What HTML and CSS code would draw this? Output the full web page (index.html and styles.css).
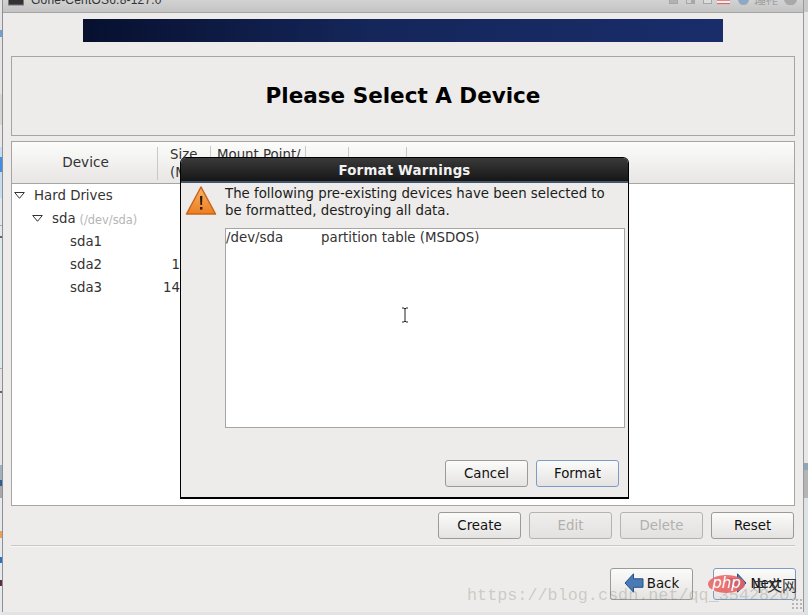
FILE: index.html
```html
<!DOCTYPE html>
<html lang="en">
<head>
<meta charset="utf-8">
<title>Format Warnings</title>
<link rel="stylesheet" href="styles.css">
</head>
<body>
<div class="strip-left"></div>
<div class="strip-right"></div>
<div class="vm">
  <div class="titlebar">
    <svg class="term" width="16" height="6" viewBox="0 0 16 6"><rect x=".5" y="-6" width="15" height="11" fill="#333" stroke="#777"/></svg>
    <span class="vmname">Gone-CentOS6.8-127.0</span>
    <span class="tools">
      <i class="tool"></i><i class="tool half"></i><i class="tool light"></i>
      <svg class="flag" width="13" height="5" viewBox="0 0 13 5"><rect width="13" height="5" fill="#eee"/><rect y="0" width="13" height="1" fill="#d98a8a"/><rect y="3" width="13" height="1.4" fill="#cf6a6a"/></svg>
      <svg class="gear" width="11" height="5" viewBox="0 0 11 5"><circle cx="5.5" cy="-.5" r="5.5" fill="#8fa8c4"/></svg>
      <span class="ops">操作</span>
      <svg class="close" width="13" height="5" viewBox="0 0 13 5"><circle cx="6.5" cy="-1" r="6.5" fill="#a9a9a9"/></svg>
    </span>
  </div>
  <div class="content">
    <div class="banner"></div>
    <div class="header"><h1>Please Select A Device</h1></div>
    <div class="table">
      <div class="thead">
        <div class="th th-device">Device</div>
        <div class="th th-size">Size<br>(MB)</div>
        <div class="th th-mount">Mount Point/<br>RAID/Volume</div>
        <div class="th th-a"></div>
        <div class="th th-b"></div>
        <div class="th th-rest"></div>
      </div>
      <div class="tbody">
        <div class="row"><svg class="arrow" width="11" height="7" viewBox="0 0 11 7"><path d="M.7.5h9.6L5.5 6.3z" fill="#fff" stroke="#333"/></svg><span>Hard Drives</span></div>
        <div class="row l1"><svg class="arrow" width="11" height="7" viewBox="0 0 11 7"><path d="M.7.5h9.6L5.5 6.3z" fill="#fff" stroke="#333"/></svg><span>sda</span><small>(/dev/sda)</small></div>
        <div class="row l2"><span class="name">sda1</span></div>
        <div class="row l2"><span class="name">sda2</span><span class="size">1</span></div>
        <div class="row l2"><span class="name">sda3</span><span class="size">14</span></div>
      </div>
    </div>
    <div class="actions">
      <button class="btn">Create</button>
      <button class="btn off">Edit</button>
      <button class="btn off">Delete</button>
      <button class="btn">Reset</button>
    </div>
    <div class="rule"></div>
    <div class="nav">
      <button class="btn tall">
        <svg width="20" height="20" viewBox="0 0 20 20"><path d="M1 10 9.5 .8v5H19v8.5H9.500v4.900z" fill="#4a7ab5" stroke="#234f86"/></svg>
        Back
      </button>
      <button class="btn tall focus">
        <svg width="20" height="20" viewBox="0 0 20 20"><path d="M19 10 10.500 .8v5H1v8.500h9.500v4.900z" fill="#4a7ab5" stroke="#234f86"/></svg>
        Next
      </button>
    </div>
  </div>
</div>

<div class="dialog">
  <div class="dtitle">Format Warnings</div>
  <div class="dbody">
    <div class="msg">
      <svg class="warn" width="32" height="32" viewBox="0 0 32 32">
        <defs><linearGradient id="w" x1="0" y1="0" x2="0" y2="1"><stop offset="0" stop-color="#f7b267"/><stop offset="1" stop-color="#ee7d1f"/></linearGradient></defs>
        <path d="M16 2 30.500 29H1.500z" fill="url(#w)" stroke="#c9641a" stroke-width="1.500" stroke-linejoin="round"/>
        <path d="M15 11h2.400l-.4 9h-1.600z" fill="#2c1c08"/><rect x="15" y="22" width="2.400" height="2.600" fill="#2c1c08"/>
      </svg>
      <p>The following pre-existing devices have been selected to be formatted, destroying all data.</p>
    </div>
    <div class="list">
      <span class="dev">/dev/sda</span><span>partition table (MSDOS)</span>
      <svg class="ibeam" width="8" height="16" viewBox="0 0 8 16"><path d="M1 1h2l1 1 1-1h2M4 2v12M1 15h2l1-1 1 1h2" fill="none" stroke="#222"/></svg>
    </div>
    <div class="dactions">
      <button class="btn">Cancel</button>
      <button class="btn focus">Format</button>
    </div>
  </div>
</div>

<div class="mark">https://blog.csdn.net/qq_35428201</div>
<div class="php"><span class="pill">php</span><span class="cn">中文网</span></div>
<div class="grip"></div>
</body>
</html>
```

FILE: styles.css
```css
* { box-sizing: border-box; }
html, body { margin: 0; height: 100%; }
body {
  width: 808px; height: 615px; overflow: hidden; position: relative;
  background: #e3e3e3;
  font-family: "DejaVu Sans", sans-serif; font-size: 13.33px; color: #1c1c1c;
}
.strip-left {
  position: absolute; left: 0; top: 0; width: 2px; height: 615px;
  background: linear-gradient(#e4e4e4 0 30px, #6d9fd8 30px 37px, #e4e4e4 37px 94px, #d6d6d2 94px 125px, #e8e8e8 125px 147px,
    #c6dcf0 147px 157px, #3f8fe6 157px 172px, #c6dcf0 172px 198px, #dfe9ef 198px 225px, #a9a9a9 225px 226px, #dfe9ef 226px 236px,
    #666 236px 238px, #dbe8ee 238px 368px, #aaa 368px 369px, #e4e4e4 369px 391px, #666 391px 393px, #e6e6e6 393px 465px,
    #9fb0c0 465px 480px, #2d5f94 480px 486px, #a8a8a8 486px 498px, #e4eaee 498px 531px, #e8a05a 531px 538px, #e6eaee 538px 557px,
    #2c74c2 557px 563px, #e6eaee 563px 580px, #5a3040 580px 586px, #e6eaee 586px);
}
.strip-right {
  position: absolute; left: 804px; top: 0; width: 4px; height: 615px;
  background: linear-gradient(#c8c8c8 0 12px, #e7e7e7 12px 463px, #8fa5b8 463px 470px, #b4b4b4 470px 498px, #dde2e4 498px);
}
.vm {
  position: absolute; left: 2px; top: 0; width: 802px; height: 612px;
  background: #edecea; border-left: 1px solid #8f8f8f; border-right: 1px solid #9a9a9a;
  display: flex; flex-direction: column;
}
.titlebar {
  height: 13px; flex: none; display: flex; align-items: flex-start; overflow: hidden;
  background: linear-gradient(#d2d2d2, #c4c4c4); border-bottom: 1px solid #a4a4a4;
  padding-left: 5px;
}
.term { flex: none; }
.vmname { font: 12px/14px "Liberation Sans", sans-serif; color: #333; margin: -7px 0 0 7px; letter-spacing: .2px; white-space: nowrap; }
.tools { margin-left: auto; display: flex; align-items: flex-start; gap: 8px; height: 5px; padding-right: 6px; overflow: hidden; }
.tool { width: 9px; height: 4px; background: #b2b2b2; border: 1px solid #a6a6a6; border-top: 0; display: block; }
.tool.half { background: linear-gradient(90deg, #d0d0d0 50%, #a8a8a8 50%); }
.tool.light { background: #dcdcdc; }
.flag { margin-left: -3px; }
.ops { font: 12px/4px "Noto Sans CJK SC", sans-serif; color: #a0a0a0; height: 5px; overflow: hidden; width: 24px; margin-left: -3px; white-space: nowrap; }
.close { margin-left: -2px; }
.content { flex: 1; padding: 6px 8px 0; display: flex; flex-direction: column; min-height: 0; }
.banner { height: 23px; width: 640px; margin: 0 0 14px 72px; flex: none; background: linear-gradient(90deg, #07102f, #14265a 45%, #192d6b); }
.header {
  height: 80px; flex: none; border: 1px solid #a5a5a3; display: flex; align-items: center; justify-content: center;
}
h1 { margin: 0; font-size: 21.5px; line-height: 26px; font-weight: bold; color: #000; }
.table { height: 365px; margin-top: 5px; flex: none; border: 1px solid #a5a5a3; background: #fff; display: flex; flex-direction: column; }
.thead {
  height: 42px; flex: none; display: flex; align-items: center; border-bottom: 1px solid #a5a5a3;
  background: linear-gradient(#fcfcfb, #e7e6e4); line-height: 19px; color: #333;
}
.th { height: 33px; border-right: 1px solid #c8c8c6; white-space: nowrap; overflow: hidden; flex: none; margin-top: 1px; }
.th-device { width: 146px; display: flex; align-items: center; justify-content: center; padding: 0 0 2px 2px; font-size: 13.6px; }
.th-size { width: 53px; padding-left: 12px; line-height: 18px; margin-top: 0; height: 34px; }
.th-mount { width: 95px; padding-left: 6px; line-height: 18px; margin-top: 0; height: 34px; }
.th-a { width: 43px; }
.th-b { width: 58px; }
.th-rest { border: 0; flex: 1; }
.row { height: 23px; display: flex; align-items: center; padding-left: 2px; color: #333; white-space: nowrap; }
.row .arrow { margin-right: 9px; flex: none; }
.row.l1 { padding-left: 20px; }
.row.l2 { padding-left: 58px; }
.name { width: 93px; }
.size { width: 17px; text-align: right; }
small { font-size: 11.4px; color: #b5b5b5; margin: 2px 0 0 4px; }
.actions { display: flex; justify-content: flex-end; gap: 8px; padding: 6px 1px 0 0; flex: none; }
.btn {
  width: 83px; height: 27px; padding: 0; font: inherit; color: #111;
  border: 1px solid #9c9a96; border-radius: 3px;
  background: linear-gradient(#fbfbfa, #e4e3e1);
  display: inline-flex; align-items: center; justify-content: center;
}
.btn.off { color: #b0b0ae; background: linear-gradient(#efeeec, #e3e2e0); border-color: #b4b3b0; }
.btn.focus { border-color: #7c9cc6; }
.btn.tall { height: 32px; padding-bottom: 2px; }
.btn.tall svg { margin-right: 3px; }
.rule { height: 2px; margin-top: 6px; flex: none; border-top: 1px solid #c9c8c5; border-bottom: 1px solid #f7f7f6; }
.nav { display: flex; justify-content: flex-end; gap: 20px; margin-top: 21px; margin-right: -1px; flex: none; }

.dialog {
  position: absolute; left: 180px; top: 157px; width: 449px; height: 342px;
  border: 1px solid #000; border-bottom-width: 2px; border-radius: 6px 6px 0 0;
  background: #edecea; display: flex; flex-direction: column;
}
.dtitle {
  height: 25px; flex: none; text-align: center; font-weight: bold; color: #f2f2f2; line-height: 25px; letter-spacing: .2px;
  background: linear-gradient(#3a3a3a, #161616); border-bottom: 2px solid #43566e; border-radius: 5px 5px 0 0;
}
.dbody { flex: 1; display: flex; flex-direction: column; min-height: 0; padding: 0 3px; }
.msg { display: flex; height: 45px; flex: none; }
.warn { flex: none; margin: 2px 0 0 1px; }
.msg p { margin: 2px 0 0 8px; line-height: 17px; width: 395px; color: #1c1c1c; }
.list {
  position: relative; height: 200px; margin-left: 41px; width: 400px; flex: none; border: 1px solid #a5a5a3; background: #fff; color: #333;
  display: flex; align-items: flex-start; line-height: 16px; padding-top: 1px;
}
.dev { width: 95px; }
.ibeam { position: absolute; left: 175px; top: 78px; }
.dactions { display: flex; justify-content: flex-end; gap: 8px; padding: 32px 6px 0 0; }

.mark {
  position: absolute; left: 467px; top: 586px; font: 16.8px/20px "Liberation Mono", monospace; color: rgba(120,120,110,.3);
  white-space: nowrap;
}
.php { position: absolute; left: 708px; top: 575px; height: 18px; display: flex; align-items: center; }
.pill {
  width: 37px; height: 18px; border-radius: 50%; background: rgba(232,96,96,.86); color: #fff;
  font: italic 15px/17px "DejaVu Sans", sans-serif; text-align: center;
}
.cn { font: 15px/18px "Noto Sans CJK SC", sans-serif; color: #333; margin: 1px 0 0 7px; white-space: nowrap; }
.grip {
  position: absolute; left: 791px; top: 598px; width: 12px; height: 12px;
  background-image: radial-gradient(#b5b5b5 1px, transparent 1.2px); background-size: 4px 4px;
}
```
